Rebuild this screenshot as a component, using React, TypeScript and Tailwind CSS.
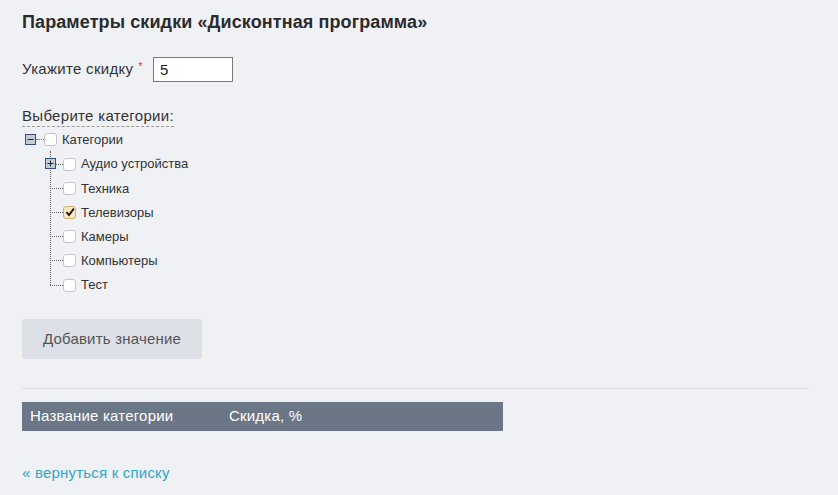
import React from 'react';

const font = { fontFamily: '"Liberation Sans", Arial, sans-serif' };

function Box({ checked }: { checked?: boolean }) {
  return (
    <span
      className={`flex h-[13px] w-[13px] shrink-0 items-center justify-center rounded-[3px] border ${
        checked ? 'border-[#c9b27a] bg-[#fbe7bd]' : 'border-[#c4c6ca] bg-white'
      }`}
    >
      {checked && (
        <svg width="10" height="10" viewBox="0 0 10 10">
          <path d="M1.5 5.2 L4 8 L8.8 1.6" fill="none" stroke="#111" strokeWidth="1.8" />
        </svg>
      )}
    </span>
  );
}

function Toggle({ open }: { open?: boolean }) {
  return (
    <span className="flex h-[11px] w-[11px] shrink-0 items-center justify-center border border-[#2f4f86] bg-[#c5cad3]">
      <svg width="9" height="9" viewBox="0 0 9 9">
        <path d="M1.5 4.5 H7.5" stroke="#1d2a44" strokeWidth="1" />
        {!open && <path d="M4.5 1.5 V7.5" stroke="#1d2a44" strokeWidth="1" />}
      </svg>
    </span>
  );
}

const children = [
  { name: 'Аудио устройства', folder: true },
  { name: 'Техника' },
  { name: 'Телевизоры', checked: true },
  { name: 'Камеры' },
  { name: 'Компьютеры' },
  { name: 'Тест' },
];

export default function App() {
  return (
    <div className="min-h-[495px] bg-[#f0f1f5] px-[22px] pt-[11px] text-[#333]" style={font}>
      <h1 className="text-[18px] font-bold leading-[22px] tracking-[0.1px] text-[#2b2b2b]">
        Параметры скидки «Дисконтная программа»
      </h1>

      <div className="mt-[24px] flex items-center text-[15px] tracking-[0.3px]">
        <span>Укажите скидку</span>
        <span className="ml-[5px] -mt-[7px] text-[11px] text-[#e0342c]">*</span>
        <input
          defaultValue="5"
          className="ml-[10px] h-[25px] w-[80px] border border-[#7a7a7a] bg-white px-[6px] text-[15px] text-[#222] outline-none"
        />
      </div>

      <div className="mt-[25px] inline-block border-b border-dashed border-[#9a9a9a] pb-[1px] text-[15px] leading-[18px] tracking-[0.3px]">
        Выберите категории:
      </div>

      <div className="-mt-[1px] text-[13px] text-[#333]">
        <div className="flex h-[25px] items-center pl-[3px]">
          <Toggle open />
          <span className="w-[8px] border-t border-dotted border-[#666]" />
          <Box />
          <span className="ml-[5px]">Категории</span>
        </div>
        <div className="relative ml-[28px]">
          <span className="absolute -top-[1px] left-0 h-[134px] border-l border-dotted border-[#666]" />
          {children.map((c) => (
            <div key={c.name} className="relative flex h-[24.2px] items-center">
              {c.folder ? (
                <>
                  <span className="absolute left-[-5px] top-[6px] z-10">
                    <Toggle />
                  </span>
                  <span className="ml-[6px] w-[7px] border-t border-dotted border-[#666]" />
                </>
              ) : (
                <span className="w-[13px] border-t border-dotted border-[#666]" />
              )}
              <Box checked={c.checked} />
              <span className="ml-[5px]">{c.name}</span>
            </div>
          ))}
        </div>
      </div>

      <button className="mt-[22px] h-[40px] w-[180px] rounded-[2px] bg-[#dde1e7] text-[15px] tracking-[0.2px] text-[#555]">
        Добавить значение
      </button>

      <div className="mr-[7px] mt-[29px] border-t border-[#dcdfe3]" />

      <div className="mt-[13px] flex h-[29px] w-[481px] items-center bg-[#6b7687] text-[15px] tracking-[0.2px] text-white">
        <span className="w-[207px] pl-[8px]">Название категории</span>
        <span>Скидка, %</span>
      </div>

      <a href="#" className="mt-[31px] block text-[15px] tracking-[0.2px] text-[#2ea7c8]">
        « вернуться к списку
      </a>
    </div>
  );
}
